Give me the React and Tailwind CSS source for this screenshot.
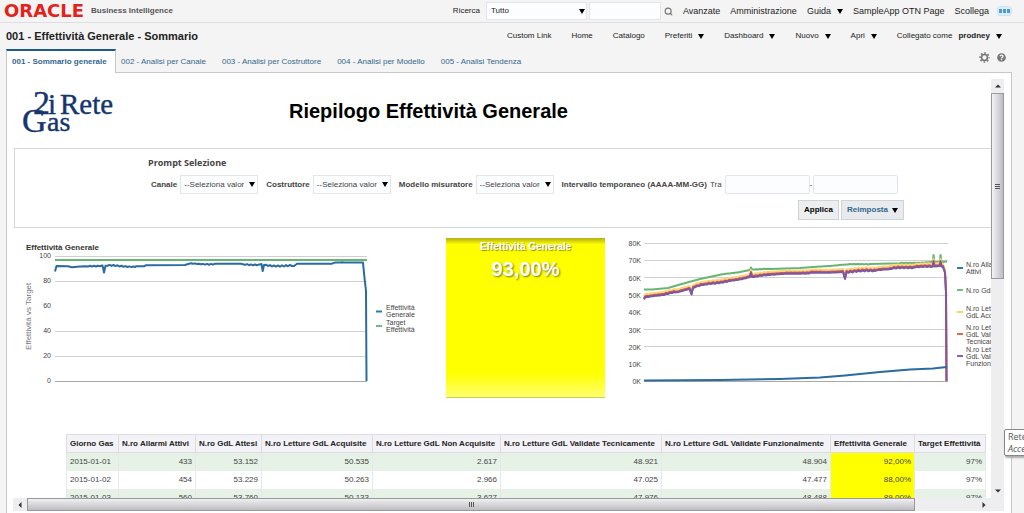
import React from "react";
import { FaQuestionCircle } from "react-icons/fa";
import { Search } from "lucide-react";

const Caret = ({ className = "" }) => (
  <svg viewBox="0 0 6 5" className={"w-[6px] h-[5px] shrink-0 fill-black " + className} aria-hidden="true">
    <path d="M0 0h6L3 5z" />
  </svg>
);

const NavLink = ({ children, menu, className = "" }) => (
  <a href="#" className={"flex items-center gap-[6px] whitespace-nowrap " + className}>
    {children}
    {menu && <Caret />}
  </a>
);

function Gear() {
  return (
    <svg viewBox="0 0 12 12" className="w-[11px] h-[11px]" fill="none" stroke="#777" aria-hidden="true">
      <circle cx="6" cy="6" r="3.2" strokeWidth="1.7" />
      <circle cx="6" cy="6" r="4.9" strokeWidth="1.6" strokeDasharray="1.9 1.95" strokeDashoffset="0.95" />
    </svg>
  );
}

function TopBar() {
  return (
    <header className="flex items-center h-[23px] border-b border-[#dedede] pl-1 pr-3 shrink-0">
      <span className="font-['DejaVu_Sans'] font-bold text-[18px] leading-5 text-[#e2231a]">ORACLE</span>
      <span className="ml-[7px] font-bold text-[#555] whitespace-nowrap">Business Intelligence</span>
      <div className="flex-1" />
      <form className="flex items-center" onSubmit={(e) => e.preventDefault()}>
        <label htmlFor="scope" className="mr-[6px]">Ricerca</label>
        <div className="relative flex items-center">
          <select id="scope" className="appearance-none w-[101px] h-[18px] pl-1 bg-[#fcfdfe] border border-[#e2e6ea]">
            <option>Tutto</option>
          </select>
          <Caret className="absolute right-[2px] pointer-events-none" />
        </div>
        <input aria-label="Testo da cercare" className="ml-[2px] w-[72px] h-[18px] px-1 bg-[#fcfdfe] border border-[#e2e6ea]" />
        <button type="submit" aria-label="Cerca" className="ml-[3px]">
          <Search className="w-[9px] h-[9px] text-[#777]" strokeWidth={3} />
        </button>
      </form>
      <nav className="flex items-center gap-[10px] ml-[10px] text-[9px]">
        <NavLink>Avanzate</NavLink>
        <NavLink>Amministrazione</NavLink>
        <NavLink menu>Guida</NavLink>
        <NavLink>SampleApp OTN Page</NavLink>
        <NavLink>Scollega</NavLink>
      </nav>
      <button aria-label="Altro" className="ml-2 flex items-center justify-center gap-px w-[15px] h-[10px] rounded-[3px] bg-[#d9edfa] border border-[#cfe4f2]">
        <span className="w-[3px] h-[4px] bg-[#4f9bd0]" />
        <span className="w-[3px] h-[4px] bg-[#4f9bd0]" />
        <span className="w-[3px] h-[4px] bg-[#4f9bd0]" />
      </button>
    </header>
  );
}

function TitleBar() {
  return (
    <div className="flex items-center h-[26px] pl-[6px] pr-[22px] shrink-0">
      <h1 className="flex-1 text-[11px] font-bold whitespace-nowrap">001 - Effettività Generale - Sommario</h1>
      <nav className="flex items-center gap-5">
        <NavLink>Custom Link</NavLink>
        <NavLink>Home</NavLink>
        <NavLink>Catalogo</NavLink>
        <NavLink menu>Preferiti</NavLink>
        <NavLink menu>Dashboard</NavLink>
        <NavLink menu>Nuovo</NavLink>
        <NavLink menu>Apri</NavLink>
        <div className="flex items-center gap-[6px]">
          <span className="whitespace-nowrap">Collegato come</span>
          <NavLink menu className="font-bold">prodney</NavLink>
        </div>
      </nav>
    </div>
  );
}

const TABS = ["002 - Analisi per Canale", "003 - Analisi per Costruttore", "004 - Analisi per Modello", "005 - Analisi Tendenza"];

function Tabs() {
  return (
    <div className="flex items-stretch h-[23px] px-[6px] shrink-0 text-[#33678c]">
      <a href="#" className="relative z-10 flex items-center -mb-px w-[110px] pl-[5px] bg-white border-t-2 border-t-[#1f5a8c] border-x border-x-[#c8c8c8] font-bold whitespace-nowrap">
        001 - Sommario generale
      </a>
      <nav className="flex items-center gap-4 pl-[5px] pt-[2px]">
        {TABS.map((t) => (
          <a key={t} href="#" className="whitespace-nowrap">{t}</a>
        ))}
      </nav>
      <div className="flex-1" />
      <div className="flex items-center gap-[7px] pr-3 pb-[7px]">
        <button aria-label="Opzioni pagina"><Gear /></button>
        <button aria-label="Guida"><FaQuestionCircle className="w-[9px] h-[9px] text-[#777]" /></button>
      </div>
    </div>
  );
}

function Logo() {
  return (
    <svg viewBox="0 0 100 50" className="w-[100px] h-[50px] shrink-0" fill="#16356f" stroke="#16356f" strokeWidth="0.4" fontFamily="'Liberation Serif', serif" role="img" aria-label="2i Rete Gas">
      <text x="11" y="25" fontSize="34">2</text>
      <text x="26" y="25" fontSize="29">i</text>
      <text x="38" y="25" fontSize="29">Rete</text>
      <text x="0" y="43" fontSize="34">G</text>
      <text x="25" y="42" fontSize="28">as</text>
    </svg>
  );
}

function PromptSelect({ id, label }) {
  return (
    <div className="flex items-center gap-[3px]">
      <label htmlFor={id} className="font-bold whitespace-nowrap">{label}</label>
      <div className="relative flex items-center">
        <select id={id} className="appearance-none w-[78px] h-[19px] pl-[3px] pr-[13px] bg-[#fcfdfe] border border-[#e2e6ea]">
          <option>--Seleziona valore--</option>
        </select>
        <Caret className="absolute right-[3px] pointer-events-none" />
      </div>
    </div>
  );
}

function Prompt() {
  return (
    <section className="border border-r-0 border-[#d5d5d8] h-20 pl-[133px] pt-2 text-[#444]">
      <h3 className="font-['Open_Sans'] font-bold text-[9px] leading-[11px]">Prompt Selezione</h3>
      <div className="w-[756px]">
        <div className="flex items-center gap-2 pl-[3px] mt-[7px]">
          <PromptSelect id="canale" label="Canale" />
          <PromptSelect id="costruttore" label="Costruttore" />
          <PromptSelect id="modello" label="Modello misuratore" />
          <div className="flex items-center gap-[3px]">
            <span className="font-bold whitespace-nowrap">Intervallo temporaneo (AAAA-MM-GG)</span>
            <label htmlFor="da">Tra</label>
            <div className="flex items-center">
              <input id="da" className="w-[85px] h-[19px] px-1 bg-[#fcfdfe] border border-[#dfe5ea] rounded-[2px]" />
              <span className="w-[3px]">-</span>
              <input aria-label="e" className="w-[85px] h-[19px] px-1 bg-[#fcfdfe] border border-[#dfe5ea] rounded-[2px]" />
            </div>
          </div>
        </div>
        <div className="flex justify-end gap-[2px] mt-[6px] font-bold">
          <button className="h-5 w-[41px] bg-[#eceef0] border border-[#cfd2d6] text-black">Applica</button>
          <button className="flex items-center justify-center gap-1 h-5 w-[63px] bg-[#e8ebee] border border-[#cfd2d6] text-[#33678c]">
            Reimposta <Caret />
          </button>
        </div>
      </div>
    </section>
  );
}

/* Expands [x, y, amplitude] anchors into a polyline with a small repeatable ripple. */
function ripple(anchors, step = 2) {
  const out = [];
  for (let i = 0; i < anchors.length - 1; i++) {
    const [x0, y0, amp = 0] = anchors[i];
    const [x1, y1] = anchors[i + 1];
    out.push([x0, y0]);
    if (!amp) continue;
    for (let x = x0 + step; x < x1; x += step) {
      const k = (x - x0) / (x1 - x0);
      out.push([x, y0 + (y1 - y0) * k + amp * Math.sin(x * 2.3) * Math.cos(x * 0.7)]);
    }
  }
  out.push(anchors[anchors.length - 1].slice(0, 2));
  return out.map(([x, y]) => x.toFixed(1) + "," + y.toFixed(1)).join(" ");
}

const EFFICACY = [
  [35, 33.5], [36.5, 28], [48, 28.3], [52, 29.2], [60, 28.6], [66, 28.2, 0.9], [82.5, 27.4], [84, 34.5], [85.5, 27.8, 1.1],
  [116, 28.3], [124, 28.3], [126, 27.2], [165, 27], [169, 25.8, 1], [196, 25.8], [221, 25.8], [223, 26.2, 1], [240, 26.5],
  [241.5, 26], [242.7, 33], [244, 27, 1.3], [274, 28], [277, 25.7], [312, 25.7], [314, 24.8, 0.6], [324, 24.6], [343, 24.6],
  [344.5, 40], [346, 53], [346.5, 143],
];

function EfficacyChart() {
  return (
    <svg viewBox="0 0 410 165" className="w-[410px] h-[165px] shrink-0" fontSize="7" fill="#444" role="img" aria-label="Effettività Generale">
      <text x="6" y="12" fontSize="8" fontWeight="700" fill="#333">Effettività Generale</text>
      <text transform="translate(11 112) rotate(-90)" fontSize="8" fill="#777">Effettività vs Target</text>
      {[18, 43, 93, 118, 143].map((y) => (
        <path key={y} d={`M35 ${y}.5H347`} stroke={y === 143 ? "#a8a8a8" : "#d0d0d0"} />
      ))}
      {[100, 80, 60, 40, 20, 0].map((v, i) => (
        <text key={v} x="31" y={20 + i * 25} textAnchor="end">{v}</text>
      ))}
      <path d="M35 22H347" stroke="#68b573" strokeWidth="2" />
      <polyline points={ripple(EFFICACY)} fill="none" stroke="#2a6ca0" strokeWidth="2" strokeLinejoin="round" />
      <path d="M356 73.5h6" stroke="#267db3" strokeWidth="2" />
      <path d="M356 88h6" stroke="#68c182" strokeWidth="2" />
      <text x="366" y="72">Effettività</text>
      <text x="366" y="79">Generale</text>
      <text x="366" y="87">Target</text>
      <text x="366" y="94">Effettività</text>
    </svg>
  );
}

const EXPECTED = [
  [24, 51.5], [32, 51.5], [48, 50], [60, 46.5], [80, 41], [100, 36.8, 0.4], [120, 34], [130, 32], [131, 29.5], [132, 31.5, 0.4],
  [150, 31], [180, 30], [200, 28.5, 0.3], [222, 26.8, 0.7], [250, 26], [280, 25.3, 0.6], [313, 24], [313.5, 17],
  [314.5, 24], [320, 24], [320.5, 17], [321.5, 24], [327, 23.5],
];
const VALIDATED = [
  [24, 61.5], [25, 59.5, 0.6], [40, 57.5, 0.7], [55, 54.5, 0.7], [69.5, 51], [71.5, 56.5], [73, 50, 0.8], [85, 46.5, 0.8],
  [110, 43, 0.8], [130, 39, 0.7], [131, 35], [132, 39, 0.6], [155, 36.5, 0.6], [190, 35, 0.6], [223, 34], [225, 41],
  [226.5, 34, 1.1], [255, 33, 1], [270, 31, 1], [295, 29.5, 0.8], [313, 28.5], [313.5, 24], [314.5, 28.5], [320, 28],
  [320.5, 24], [321.5, 28.5], [323, 29], [325, 35], [326, 54], [326.5, 143],
];
const shift = (pts, dy) => pts.map(([x, y, a]) => [x, y + (y < 54 || x < 100 ? dy : 0), a]);
const ALARMS = "24,142.5 100,142 160,141 200,139.5 225,137.5 260,134 290,131.5 313,130.5 327,129";

const LEGEND = [
  ["#267db3", 30, ["N.ro Allarmi", "Attivi"]],
  ["#68c182", 52, ["N.ro GdL Attesi"]],
  ["#fad55c", 74, ["N.ro Letture", "GdL Acquisite"]],
  ["#ed6647", 96, ["N.ro Letture", "GdL Validate", "Tecnicamente"]],
  ["#8561c8", 118, ["N.ro Letture", "GdL Validate", "Funzionalmente"]],
];

function VolumeChart() {
  return (
    <svg viewBox="0 0 410 165" className="w-[410px] h-[165px] shrink-0" fontSize="7" fill="#444" role="img" aria-label="Letture e allarmi">
      {[5, 22, 39, 57, 91, 108, 143].map((y) => (
        <path key={y} d={`M24 ${y}.5H328`} stroke={y === 143 ? "#a8a8a8" : "#d0d0d0"} />
      ))}
      {[80, 70, 60, 50, 40, 30, 20, 10, 0].map((v, i) => (
        <text key={v} x="21" y={8 + i * 17.3} textAnchor="end">{v}K</text>
      ))}
      <g fill="none" strokeWidth="2" strokeLinejoin="round">
        <polyline points={ripple(EXPECTED)} stroke="#68b573" />
        <polyline points={ripple(shift(VALIDATED, -3))} stroke="#fad57c" />
        <polyline points={ripple(shift(VALIDATED, -1))} stroke="#cf5b45" />
        <polyline points={ripple(VALIDATED)} stroke="#7d57a5" />
        <polyline points={ALARMS} stroke="#2a6ca0" />
      </g>
      {LEGEND.map(([color, y, lines], i) => (
        <g key={i}>
          <path d={`M337 ${y}h6`} stroke={color} strokeWidth="2" />
          {lines.map((t, n) => (
            <text key={n} x="346" y={y + 2.5 + (n - (lines.length - 1) / 2) * 7}>{t}</text>
          ))}
        </g>
      ))}
    </svg>
  );
}

function Kpi() {
  return (
    <div className="w-[159px] h-[160px] shrink-0 bg-linear-to-b from-[#b4ae10] from-0% via-[#ffff00] via-[4%] to-[#ffff00] text-center">
      <div className="h-full bg-linear-to-b from-transparent from-85% to-[#ffff70] border-b border-[#cfcf50] text-white font-bold">
        <div className="pt-[3px] text-[10px] leading-3 [text-shadow:1px_1px_1px_#8a8a20]">Effettività Generale</div>
        <div className="pt-1 text-[20px] leading-6 [text-shadow:1px_1px_2px_#77771a]">93,00%</div>
      </div>
    </div>
  );
}

const COLUMNS = [
  ["Giorno Gas", "w-[52px]"],
  ["N.ro Allarmi Attivi", "w-[77px]"],
  ["N.ro GdL Attesi", "w-[66px]"],
  ["N.ro Letture GdL Acquisite", "w-[111px]"],
  ["N.ro Letture GdL Non Acquisite", "w-[128px]"],
  ["N.ro Letture GdL Validate Tecnicamente", "w-[161px]"],
  ["N.ro Letture GdL Validate Funzionalmente", "w-[169px]"],
  ["Effettività Generale", "w-[84px]"],
  ["Target Effettività", "w-[71px]"],
];
const ROWS = [
  ["2015-01-01", "433", "53.152", "50.535", "2.617", "48.921", "48.904", "92,00%", "97%"],
  ["2015-01-02", "454", "53.229", "50.263", "2.966", "47.025", "47.477", "88,00%", "97%"],
  ["2015-01-03", "560", "53.760", "50.133", "3.627", "47.976", "48.488", "89,00%", "97%"],
];

function DataTable() {
  return (
    <table className="table-fixed w-full border-collapse text-[#444]">
      <colgroup>
        {COLUMNS.map(([name, w]) => <col key={name} className={w} />)}
      </colgroup>
      <thead>
        <tr className="h-[18px] bg-[#f3f3f7] text-[#222]">
          {COLUMNS.map(([name]) => (
            <th key={name} className="px-[3px] py-0 border border-[#dcdce2] font-bold whitespace-nowrap text-left">{name}</th>
          ))}
        </tr>
      </thead>
      <tbody>
        {ROWS.map((r, i) => (
          <tr key={r[0]} className={i % 2 ? "h-[18px] bg-white" : "h-[18px] bg-[#e6f2e6]"}>
            {r.map((c, n) => (
              <td key={n} className={"px-[3px] py-0 border-x border-[#e8e8ec] " + (n === 0 ? "text-left" : "text-right") + (n === 7 ? " bg-[#ffff00]" : "")}>{c}</td>
            ))}
          </tr>
        ))}
      </tbody>
    </table>
  );
}

const Arrow = ({ d }) => (
  <svg viewBox="0 0 6 6" className="w-[6px] h-[6px] fill-[#333]" aria-hidden="true"><path d={d} /></svg>
);

function VerticalScroll() {
  return (
    <div className="flex flex-col w-[13px] shrink-0 bg-[#eeeef0]">
      <button aria-label="Su" className="flex items-center justify-center h-[14px]"><Arrow d="M0 4.5L3 1.5L6 4.5z" /></button>
      <div className="flex flex-col items-center justify-center gap-px h-[186px] border border-[#999] bg-linear-to-r from-[#f4f4f6] to-[#bdbdc6]">
        <span className="w-[5px] h-px bg-[#555]" />
        <span className="w-[5px] h-px bg-[#555]" />
        <span className="w-[5px] h-px bg-[#555]" />
      </div>
      <div className="flex-1" />
      <button aria-label="Giù" className="flex items-center justify-center h-[14px]"><Arrow d="M0 1.5h6L3 4.5z" /></button>
    </div>
  );
}

function HorizontalScroll() {
  return (
    <div className="flex h-[13px] shrink-0 bg-[#eeeef0]">
      <button aria-label="Sinistra" className="flex items-center justify-center w-[14px]"><Arrow d="M4.5 0L1.5 3L4.5 6z" /></button>
      <div className="flex items-center justify-center gap-px flex-1 border border-[#999] bg-linear-to-b from-[#f0f0f2] to-[#bdbdc2]">
        <span className="w-px h-[5px] bg-[#555]" />
        <span className="w-px h-[5px] bg-[#555]" />
        <span className="w-px h-[5px] bg-[#555]" />
      </div>
      <div className="w-[62px]" />
      <button aria-label="Destra" className="flex items-center justify-center w-[14px]"><Arrow d="M1.5 0L4.5 3L1.5 6z" /></button>
      <div className="w-[13px]" />
    </div>
  );
}

export default function App() {
  return (
    <div className="relative flex flex-col h-screen overflow-hidden bg-[#f4f4f4] text-[8px] leading-[10px] text-[#222] font-['Liberation_Sans',Arial,sans-serif]">
      <TopBar />
      <TitleBar />
      <Tabs />
      <main className="flex flex-col flex-1 min-h-0 ml-[6px] mr-3 pl-[6px] pr-[7px] pt-[6px] pb-[2px] bg-white border border-b-0 border-[#c8c8c8]">
        <div className="flex flex-1 min-h-0">
          <div className="flex-1 min-w-0 overflow-hidden pl-px">
            <div className="flex items-center h-[69px] pl-2">
              <Logo />
              <h2 className="ml-[167px] pb-[5px] text-[20px] leading-6 font-bold text-black whitespace-nowrap">Riepilogo Effettività Generale</h2>
            </div>
            <Prompt />
            <div className="flex pt-[10px] pl-[6px]">
              <EfficacyChart />
              <div className="w-4 shrink-0" />
              <Kpi />
              <div className="w-[15px] shrink-0" />
              <VolumeChart />
            </div>
            <div className="pt-[31px] pl-[52px] pr-[6px]">
              <DataTable />
            </div>
          </div>
          <VerticalScroll />
        </div>
        <HorizontalScroll />
      </main>
      <div role="tooltip" className="absolute -right-3 top-[429px] w-8 h-[27px] pl-[3px] pt-px bg-white border border-[#888] rounded-[2px] shadow-[1px_2px_2px_#aaa] text-[9px] leading-[12px] text-[#555] font-['Open_Sans']">
        <div>Rete</div>
        <div className="italic">Acce</div>
      </div>
    </div>
  );
}
